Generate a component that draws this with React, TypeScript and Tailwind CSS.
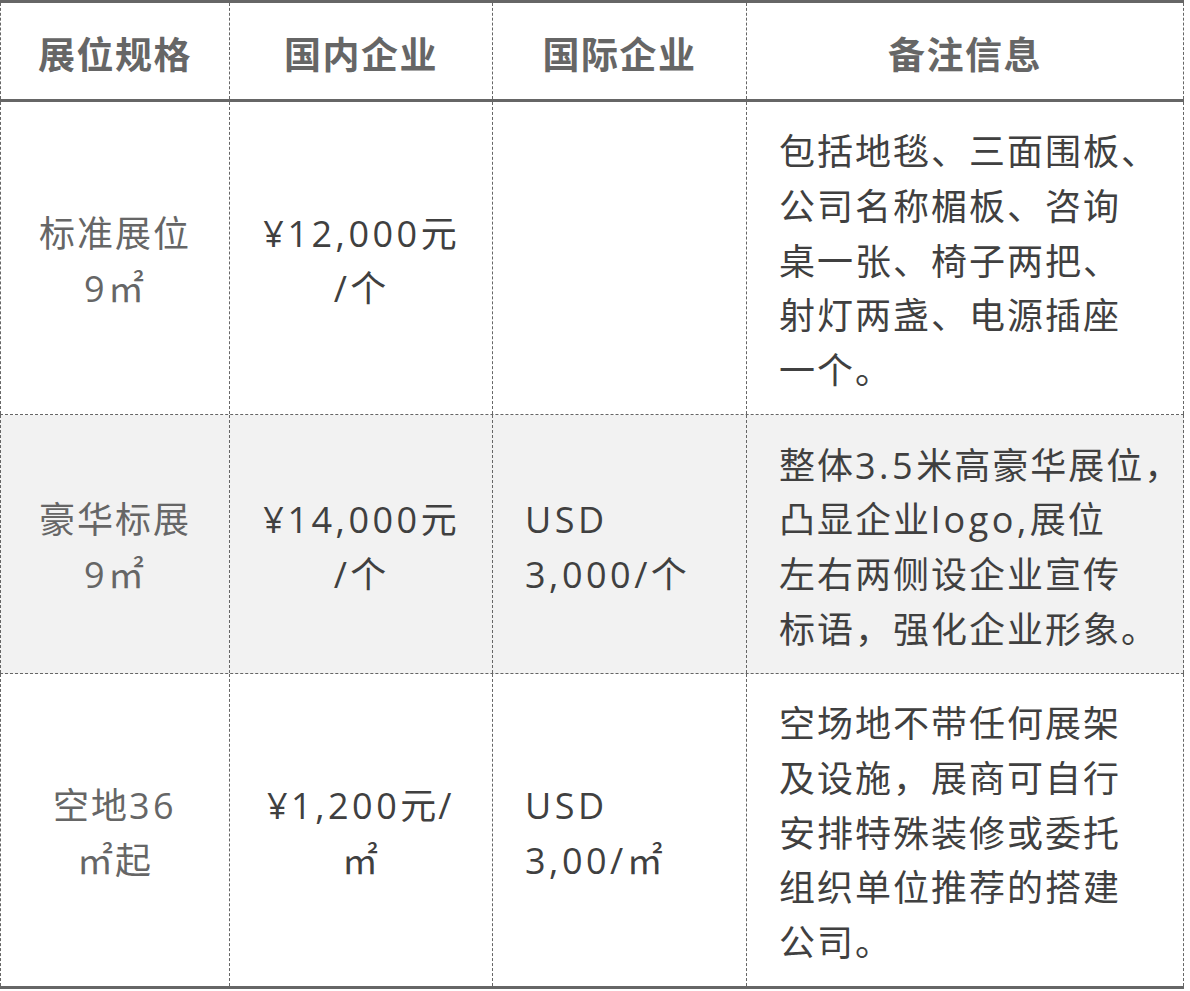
import React from "react";

const font = { fontFamily: '"Open Sans", "Noto Sans CJK SC", sans-serif' };

type Cell = { lines: string[]; align: "center" | "left"; tone: "light" | "dark" };

const rows: { h: string; bg: string; cells: Cell[] }[] = [
  {
    h: "h-[313px]",
    bg: "bg-white",
    cells: [
      { lines: ["标准展位", "9㎡"], align: "center", tone: "light" },
      { lines: ["¥12,000元", "/个"], align: "center", tone: "dark" },
      { lines: [], align: "left", tone: "dark" },
      {
        lines: ["包括地毯、三面围板、", "公司名称楣板、咨询", "桌一张、椅子两把、", "射灯两盏、电源插座", "一个。"],
        align: "left",
        tone: "dark",
      },
    ],
  },
  {
    h: "h-[259px]",
    bg: "bg-[#f2f2f2]",
    cells: [
      { lines: ["豪华标展", "9㎡"], align: "center", tone: "light" },
      { lines: ["¥14,000元", "/个"], align: "center", tone: "dark" },
      { lines: ["USD", "3,000/个"], align: "left", tone: "dark" },
      {
        lines: ["整体3.5米高豪华展位，", "凸显企业logo,展位", "左右两侧设企业宣传", "标语，强化企业形象。"],
        align: "left",
        tone: "dark",
      },
    ],
  },
  {
    h: "h-[312px]",
    bg: "bg-white",
    cells: [
      { lines: ["空地36", "㎡起"], align: "center", tone: "light" },
      { lines: ["¥1,200元/", "㎡"], align: "center", tone: "dark" },
      { lines: ["USD", "3,00/㎡"], align: "left", tone: "dark" },
      {
        lines: ["空场地不带任何展架", "及设施，展商可自行", "安排特殊装修或委托", "组织单位推荐的搭建", "公司。"],
        align: "left",
        tone: "dark",
      },
    ],
  },
];

const headers = ["展位规格", "国内企业", "国际企业", "备注信息"];

function Line({ text }: { text: string }) {
  const parts = text.split(/([A-Za-z0-9.,/¥]+)/).filter((p) => p.length > 0);
  return (
    <div>
      {parts.map((p, i) =>
        /^[A-Za-z0-9.,/¥]+$/.test(p) ? (
          <span key={i} className="tracking-[3.5px]">
            {p}
          </span>
        ) : (
          <span key={i}>{p}</span>
        )
      )}
    </div>
  );
}

export default function App() {
  return (
    <div className="w-[1190px] h-[991px] bg-white" style={font}>
      <div className="w-[1184px] border-t-[3px] border-b-[3px] border-solid border-[#666666]">
        <div className="grid grid-cols-[229px_263px_254px_438px] h-[99px] border-b-[3px] border-solid border-[#666666]">
          {headers.map((h, i) => (
            <div
              key={h}
              className={`flex items-center justify-center pt-[8px] border-l border-dashed border-[#666666] text-[37px] font-bold text-[#666666] tracking-[1.5px] ${
                i === 3 ? "border-r" : ""
              }`}
            >
              {h}
            </div>
          ))}
        </div>
        {rows.map((r, ri) => (
          <div
            key={ri}
            className={`grid grid-cols-[229px_263px_254px_438px] ${r.h} ${r.bg} ${
              ri < rows.length - 1 ? "border-b border-dashed border-[#666666]" : ""
            }`}
          >
            {r.cells.map((c, ci) => (
              <div
                key={ci}
                className={`flex flex-col justify-center pt-[8px] border-l border-dashed border-[#666666] text-[36px] leading-[54.7px] tracking-[2px] whitespace-nowrap ${
                  ci === 3 ? "border-r" : ""
                } ${c.align === "center" ? "items-center text-center" : "items-start pl-[32px]"} ${
                  c.tone === "light" ? "text-[#666666]" : "text-[#404040]"
                }`}
              >
                {c.lines.map((l, li) => (
                  <Line key={li} text={l} />
                ))}
              </div>
            ))}
          </div>
        ))}
      </div>
    </div>
  );
}
